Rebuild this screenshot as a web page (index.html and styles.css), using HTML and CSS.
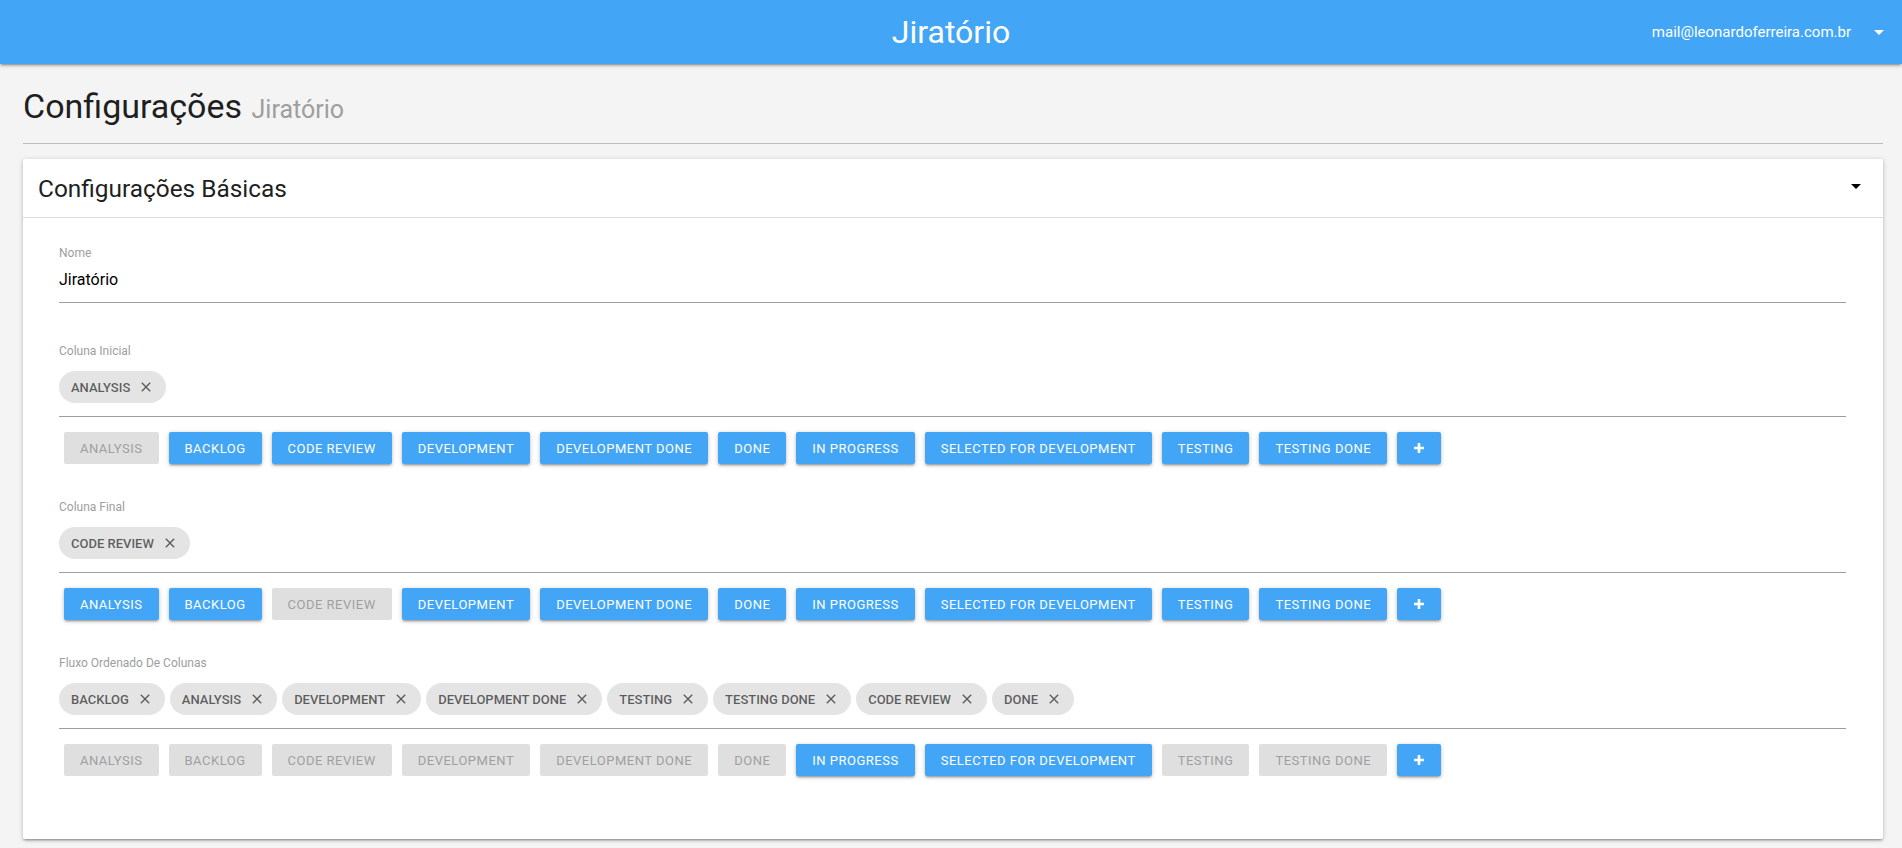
FILE: index.html
```html
<!DOCTYPE html>
<html lang="pt-BR">
<head>
<meta charset="utf-8">
<title>Jiratório</title>
<link rel="stylesheet" href="styles.css">
</head>
<body>
<header class="topbar">
  <div class="topbar-side"></div>
  <div class="brand">Jiratório</div>
  <div class="topbar-side topbar-right">
    <span class="user-mail">mail@leonardoferreira.com.br</span>
    <svg class="drop-icon" width="24" height="24" viewBox="0 0 24 24"><path d="M7 10l5 5 5-5z" fill="#fff"/></svg>
  </div>
</header>

<main class="page">
  <div class="page-title">
    <h1 class="title">Configurações <small class="subtitle">Jiratório</small></h1>
  </div>

  <section class="card">
    <div class="card-header">
      <span class="card-title">Configurações Básicas</span>
      <svg class="card-caret" width="24" height="24" viewBox="0 0 24 24"><path d="M7 10l5 5 5-5z" fill="#000"/></svg>
    </div>
    <div class="card-body">
      <div class="field">
        <div class="label">Nome</div>
        <div class="input-value">Jiratório</div>
      </div>

      <div class="field-group">
        <div class="label">Coluna Inicial</div>
        <div class="chips">
          <span class="chip">ANALYSIS<svg class="chip-x" width="16" height="16" viewBox="0 0 24 24"><path d="M19 6.41L17.59 5 12 10.59 6.41 5 5 6.41 10.59 12 5 17.59 6.41 19 12 13.41 17.59 19 19 17.59 13.41 12z"/></svg></span>
        </div>
        <div class="btn-row">
          <button class="btn disabled">ANALYSIS</button>
          <button class="btn">BACKLOG</button>
          <button class="btn">CODE REVIEW</button>
          <button class="btn">DEVELOPMENT</button>
          <button class="btn">DEVELOPMENT DONE</button>
          <button class="btn">DONE</button>
          <button class="btn">IN PROGRESS</button>
          <button class="btn">SELECTED FOR DEVELOPMENT</button>
          <button class="btn">TESTING</button>
          <button class="btn">TESTING DONE</button>
          <button class="btn btn-add"><svg width="12" height="12" viewBox="0 0 12 12"><path d="M6 1v10M1 6h10" stroke="#fff" stroke-width="2.6"/></svg></button>
        </div>
      </div>

      <div class="field-group">
        <div class="label">Coluna Final</div>
        <div class="chips">
          <span class="chip">CODE REVIEW<svg class="chip-x" width="16" height="16" viewBox="0 0 24 24"><path d="M19 6.41L17.59 5 12 10.59 6.41 5 5 6.41 10.59 12 5 17.59 6.41 19 12 13.41 17.59 19 19 17.59 13.41 12z"/></svg></span>
        </div>
        <div class="btn-row">
          <button class="btn">ANALYSIS</button>
          <button class="btn">BACKLOG</button>
          <button class="btn disabled">CODE REVIEW</button>
          <button class="btn">DEVELOPMENT</button>
          <button class="btn">DEVELOPMENT DONE</button>
          <button class="btn">DONE</button>
          <button class="btn">IN PROGRESS</button>
          <button class="btn">SELECTED FOR DEVELOPMENT</button>
          <button class="btn">TESTING</button>
          <button class="btn">TESTING DONE</button>
          <button class="btn btn-add"><svg width="12" height="12" viewBox="0 0 12 12"><path d="M6 1v10M1 6h10" stroke="#fff" stroke-width="2.6"/></svg></button>
        </div>
      </div>

      <div class="field-group">
        <div class="label">Fluxo Ordenado De Colunas</div>
        <div class="chips">
          <span class="chip">BACKLOG<svg class="chip-x" width="16" height="16" viewBox="0 0 24 24"><path d="M19 6.41L17.59 5 12 10.59 6.41 5 5 6.41 10.59 12 5 17.59 6.41 19 12 13.41 17.59 19 19 17.59 13.41 12z"/></svg></span>
          <span class="chip">ANALYSIS<svg class="chip-x" width="16" height="16" viewBox="0 0 24 24"><path d="M19 6.41L17.59 5 12 10.59 6.41 5 5 6.41 10.59 12 5 17.59 6.41 19 12 13.41 17.59 19 19 17.59 13.41 12z"/></svg></span>
          <span class="chip">DEVELOPMENT<svg class="chip-x" width="16" height="16" viewBox="0 0 24 24"><path d="M19 6.41L17.59 5 12 10.59 6.41 5 5 6.41 10.59 12 5 17.59 6.41 19 12 13.41 17.59 19 19 17.59 13.41 12z"/></svg></span>
          <span class="chip">DEVELOPMENT DONE<svg class="chip-x" width="16" height="16" viewBox="0 0 24 24"><path d="M19 6.41L17.59 5 12 10.59 6.41 5 5 6.41 10.59 12 5 17.59 6.41 19 12 13.41 17.59 19 19 17.59 13.41 12z"/></svg></span>
          <span class="chip">TESTING<svg class="chip-x" width="16" height="16" viewBox="0 0 24 24"><path d="M19 6.41L17.59 5 12 10.59 6.41 5 5 6.41 10.59 12 5 17.59 6.41 19 12 13.41 17.59 19 19 17.59 13.41 12z"/></svg></span>
          <span class="chip">TESTING DONE<svg class="chip-x" width="16" height="16" viewBox="0 0 24 24"><path d="M19 6.41L17.59 5 12 10.59 6.41 5 5 6.41 10.59 12 5 17.59 6.41 19 12 13.41 17.59 19 19 17.59 13.41 12z"/></svg></span>
          <span class="chip">CODE REVIEW<svg class="chip-x" width="16" height="16" viewBox="0 0 24 24"><path d="M19 6.41L17.59 5 12 10.59 6.41 5 5 6.41 10.59 12 5 17.59 6.41 19 12 13.41 17.59 19 19 17.59 13.41 12z"/></svg></span>
          <span class="chip">DONE<svg class="chip-x" width="16" height="16" viewBox="0 0 24 24"><path d="M19 6.41L17.59 5 12 10.59 6.41 5 5 6.41 10.59 12 5 17.59 6.41 19 12 13.41 17.59 19 19 17.59 13.41 12z"/></svg></span>
        </div>
        <div class="btn-row">
          <button class="btn disabled">ANALYSIS</button>
          <button class="btn disabled">BACKLOG</button>
          <button class="btn disabled">CODE REVIEW</button>
          <button class="btn disabled">DEVELOPMENT</button>
          <button class="btn disabled">DEVELOPMENT DONE</button>
          <button class="btn disabled">DONE</button>
          <button class="btn">IN PROGRESS</button>
          <button class="btn">SELECTED FOR DEVELOPMENT</button>
          <button class="btn disabled">TESTING</button>
          <button class="btn disabled">TESTING DONE</button>
          <button class="btn btn-add"><svg width="12" height="12" viewBox="0 0 12 12"><path d="M6 1v10M1 6h10" stroke="#fff" stroke-width="2.6"/></svg></button>
        </div>
      </div>
    </div>
  </section>
</main>
</body>
</html>
```

FILE: styles.css
```css
* { box-sizing: border-box; }

html, body {
  margin: 0;
  padding: 0;
}

body {
  background: #f4f4f4;
  font-family: Roboto, "Noto Sans", Arial, sans-serif;
  color: rgba(0, 0, 0, 0.87);
  height: 848px;
  overflow: hidden;
}

.topbar {
  height: 64px;
  background: #42a5f5;
  display: grid;
  grid-template-columns: 1fr auto 1fr;
  align-items: center;
  color: #fff;
  box-shadow: 0 2px 2px 0 rgba(0,0,0,0.14), 0 3px 1px -2px rgba(0,0,0,0.12), 0 1px 5px 0 rgba(0,0,0,0.2);
  position: relative;
  z-index: 2;
}

.brand {
  font-size: 32px;
  line-height: 64px;
  font-weight: 400;
}

.topbar-right {
  display: flex;
  justify-content: flex-end;
  align-items: center;
  padding-right: 11px;
}

.user-mail {
  font-size: 15px;
  margin-right: 16px;
}

.drop-icon { display: block; }

.page {
  padding: 0 19px 0 23px;
}

.page-title {
  padding-top: 22px;
  padding-bottom: 17px;
  border-bottom: 1px solid #bdbdbd;
}

.title {
  margin: 0;
  font-size: 34px;
  line-height: 40px;
  height: 40px;
  font-weight: 400;
  color: #1f1f1f;
}

.subtitle {
  font-size: 25px;
  color: #9e9e9e;
  margin-left: 1px;
}

.card {
  margin-top: 15px;
  background: #fff;
  border-radius: 2px;
  box-shadow: 0 2px 2px 0 rgba(0,0,0,0.14), 0 3px 1px -2px rgba(0,0,0,0.12), 0 1px 5px 0 rgba(0,0,0,0.2);
}

.card-header {
  height: 59px;
  border-bottom: 1px solid #dadada;
  display: flex;
  align-items: center;
  justify-content: space-between;
  padding: 2px 15px 0 15px;
}

.card-title {
  font-size: 24.4px;
  line-height: 56px;
  color: #1f1f1f;
}

.card-caret {
  display: block;
  margin-bottom: 6px;
}

.card-body {
  padding: 27px 37px 63px 36px;
}

.label {
  font-size: 12px;
  line-height: 16px;
  height: 16px;
  color: #9e9e9e;
}

.input-value {
  margin-top: 8px;
  font-size: 16px;
  line-height: 22px;
  color: #000;
  padding-bottom: 11px;
  border-bottom: 1px solid #9e9e9e;
}

.field-group {
  margin-top: 40px;
}

.field-group + .field-group {
  margin-top: 35px;
}

.chips {
  margin-top: 12px;
  display: flex;
  flex-wrap: wrap;
  gap: 5px;
  padding-bottom: 13px;
  border-bottom: 1px solid #9e9e9e;
}

.chip {
  display: inline-flex;
  align-items: center;
  height: 32px;
  padding: 0 12px;
  border-radius: 16px;
  background: #e4e4e4;
  font-size: 13px;
  font-weight: 500;
  color: rgba(0, 0, 0, 0.6);
}

.chip-x {
  margin-left: 8px;
  fill: rgba(0, 0, 0, 0.6);
  display: block;
}

.btn-row {
  margin-top: 15px;
  padding-left: 5px;
  display: flex;
  flex-wrap: wrap;
  gap: 10px;
}

.btn {
  height: 32px;
  padding: 0 16px;
  border: none;
  border-radius: 2px;
  background: #42a5f5;
  color: #fff;
  font-family: Roboto, "Noto Sans", Arial, sans-serif;
  font-size: 13px;
  letter-spacing: 0.5px;
  text-transform: uppercase;
  box-shadow: 0 2px 2px 0 rgba(0,0,0,0.14), 0 3px 1px -2px rgba(0,0,0,0.12), 0 1px 5px 0 rgba(0,0,0,0.2);
  display: inline-flex;
  align-items: center;
  justify-content: center;
  cursor: pointer;
}

.btn.disabled {
  background: #dfdfdf;
  color: #9f9f9f;
  box-shadow: none;
  cursor: default;
}

.btn-add svg { display: block; }
```
